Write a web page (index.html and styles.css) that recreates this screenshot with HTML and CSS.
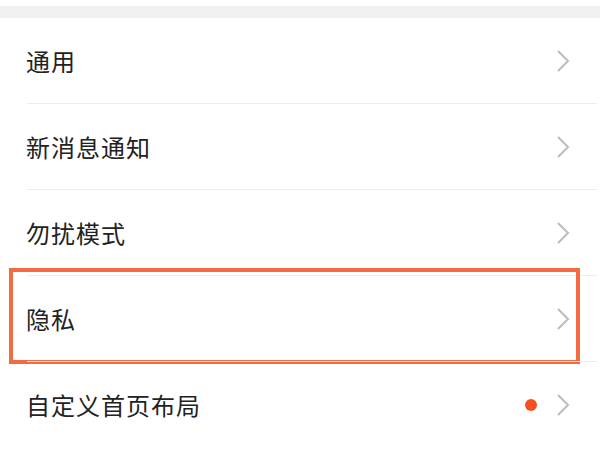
FILE: index.html
```html
<!DOCTYPE html>
<html lang="zh-CN">
<head>
<meta charset="utf-8">
<link rel="stylesheet" href="styles.css">
</head>
<body>
<div class="top-gap"></div>
<div class="band"></div>
<ul class="list">
  <li class="row"><span class="label">通用</span><span class="end"><svg class="chev" viewBox="0 0 14 24"><path d="M2 2 L12 12 L2 22"/></svg></span></li>
  <li class="row"><span class="label">新消息通知</span><span class="end"><svg class="chev" viewBox="0 0 14 24"><path d="M2 2 L12 12 L2 22"/></svg></span></li>
  <li class="row"><span class="label">勿扰模式</span><span class="end"><svg class="chev" viewBox="0 0 14 24"><path d="M2 2 L12 12 L2 22"/></svg></span></li>
  <li class="row highlight"><span class="label">隐私</span><span class="end"><svg class="chev" viewBox="0 0 14 24"><path d="M2 2 L12 12 L2 22"/></svg></span><span class="mark"></span></li>
  <li class="row"><span class="label">自定义首页布局</span><span class="end"><span class="dot"></span><svg class="chev" viewBox="0 0 14 24"><path d="M2 2 L12 12 L2 22"/></svg></span></li>
</ul>
</body>
</html>
```

FILE: styles.css
```css
html, body {
  margin: 0;
  padding: 0;
  background: #ffffff;
  font-family: "Noto Sans CJK SC", "Noto Sans", sans-serif;
  overflow: hidden;
}
.top-gap {
  height: 6px;
  background: #ffffff;
}
.band {
  height: 12px;
  background: #f0f0f2;
}
.list {
  list-style: none;
  margin: 0;
  padding: 0;
}
.row {
  position: relative;
  height: 85px;
  display: flex;
  align-items: center;
  justify-content: space-between;
  padding: 0 30px 0 26px;
  box-sizing: border-box;
}
.row::after {
  content: "";
  position: absolute;
  left: 27px;
  right: 3px;
  bottom: -1px;
  height: 1px;
  background: #ececec;
}
.row + .row {
  margin-top: 1px;
}
.label {
  font-size: 24px;
  color: #222222;
  letter-spacing: 1px;
  line-height: 1;
}
.end {
  display: flex;
  align-items: center;
  gap: 19px;
}
.chev {
  width: 14px;
  height: 24px;
  fill: none;
  stroke: #bdbdbd;
  stroke-width: 2;
}
.dot {
  width: 12px;
  height: 12px;
  border-radius: 50%;
  background: #f4511e;
}
.mark {
  position: absolute;
  left: 9px;
  top: -8px;
  width: 571px;
  height: 96px;
  border: 4px solid #f36b41;
  box-sizing: border-box;
  pointer-events: none;
}
```
